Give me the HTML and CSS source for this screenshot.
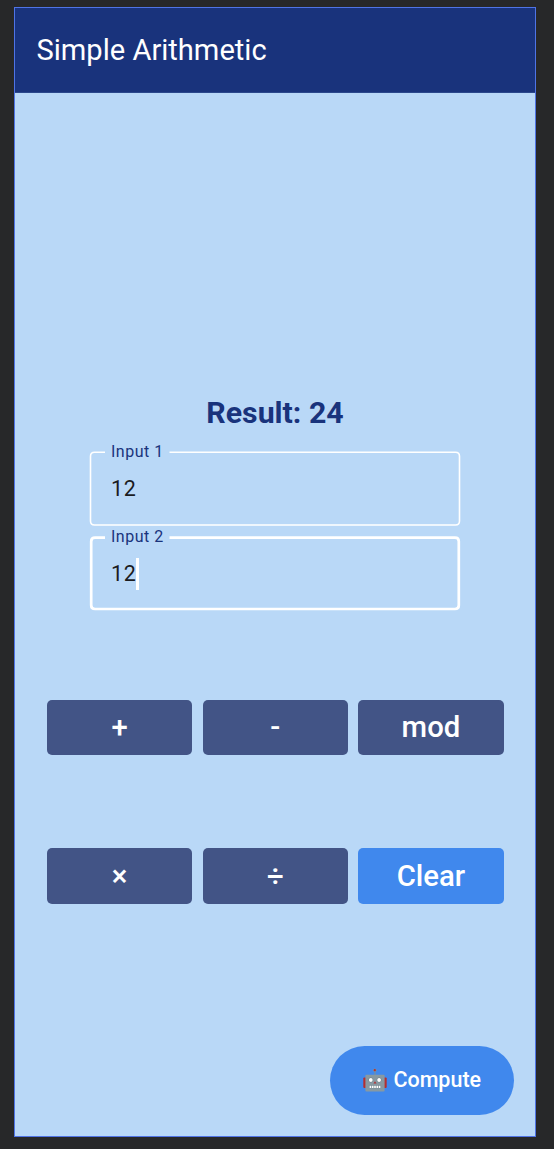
FILE: index.html
```html
<!DOCTYPE html>
<html lang="en">
<head>
<meta charset="utf-8">
<title>Simple Arithmetic</title>
<link rel="stylesheet" href="styles.css">
</head>
<body>
<div class="screen">
  <header class="app-bar"><h1 class="title">Simple Arithmetic</h1></header>
  <main class="content">
    <p class="result">Result: 24</p>
    <div class="field">
      <svg class="outline" viewBox="0 0 372 76"><path d="M16 1.200H5.500Q1.500 1.200 1.500 5.200V70Q1.500 74 5.500 74H366.500Q370.500 74 370.500 70V5.200Q370.500 1.200 366.500 1.200H80.500" stroke-width="1.600"/></svg>
      <span class="label">Input 1</span>
      <span class="value">12</span>
    </div>
    <div class="field">
      <svg class="outline" viewBox="0 0 372 76"><path d="M16 1.600H6Q2.200 1.600 2.200 5.400V69.200Q2.200 73 6 73H366Q369.800 73 369.800 69.200V5.400Q369.800 1.600 366 1.600H80.500" stroke-width="2.700"/></svg>
      <span class="label">Input 2</span>
      <span class="value">12</span><span class="caret"></span>
    </div>
    <div class="keys">
      <button class="key">+</button>
      <button class="key">-</button>
      <button class="key">mod</button>
      <button class="key">×</button>
      <button class="key">÷</button>
      <button class="key clear">Clear</button>
    </div>
    <button class="compute">
      <svg class="robot" viewBox="0 0 24 24">
        <path d="M12 2v5" stroke="#78909c" stroke-width="1.200"/>
        <circle cx="11.800" cy="2.200" r="1.700" fill="#78909c"/><circle cx="11.800" cy="2.200" r="1.100" fill="#b52f30"/>
        <rect x=".3" y="9.500" width="3" height="10.500" rx="1" fill="#b52f30"/>
        <rect x="20.700" y="9.500" width="3" height="10.500" rx="1" fill="#b52f30"/>
        <rect x="2.400" y="6.700" width="19.200" height="16.900" rx="1" fill="#8799a2"/>
        <circle cx="7.800" cy="12" r="2.400" fill="#6b7c84"/><circle cx="16.100" cy="12" r="2.400" fill="#6b7c84"/>
        <circle cx="7.800" cy="12" r="1.900" fill="#fff"/><circle cx="16.100" cy="12" r="1.900" fill="#fff"/>
        <path d="m12 13.200 1.500 2.400h-3z" fill="#b52f30"/>
        <rect x="6" y="17.300" width="12" height="3" rx="1.200" fill="#76878f"/>
        <path d="M6.600 18.800h11" stroke="#fff" stroke-width="2.200" stroke-dasharray="1.600 .7"/>
      </svg>
      <span>Compute</span>
    </button>
  </main>
</div>
</body>
</html>
```
FILE: styles.css
```css
* { box-sizing: border-box; }
body {
  margin: 0;
  height: 1149px;
  padding: 7px 18px 12px 14px;
  background: #272829;
  font-family: Roboto, sans-serif;
}
.screen {
  height: 1130px;
  border: 1px solid #4f74e6;
  background: #b9d8f7;
  display: flex;
  flex-direction: column;
}
.app-bar {
  height: 85px;
  padding: 0 21.500px;
  background: #19337c;
  border-bottom: 1px solid #2b488c;
  display: flex;
  align-items: center;
}
.title {
  margin: 0;
  color: #fff;
  font-size: 29.100px;
  font-weight: 400;
  line-height: 36px;
}
.content {
  flex: 1;
  display: flex;
  flex-direction: column;
  align-items: center;
  padding-top: 302px;
}
.result {
  margin: 0 0 20px;
  color: #19337c;
  font-size: 30.300px;
  font-weight: 700;
  line-height: 36px;
}
.field {
  position: relative;
  width: 372px;
  height: 76px;
  margin-bottom: 9px;
  padding: 23px 22px;
  display: flex;
}
.outline {
  position: absolute;
  inset: 0;
  width: 372px;
  height: 76px;
  fill: none;
  stroke: #fff;
}
.label {
  position: absolute;
  left: 22px;
  top: -9px;
  color: #19337c;
  font-size: 16px;
  line-height: 20px;
  letter-spacing: .5px;
}
.value {
  color: #1b1c1f;
  font-size: 21.500px;
  line-height: 30px;
  letter-spacing: .7px;
}
.caret {
  width: 3px;
  height: 32px;
  margin: -1px 0 0 -1px;
  background: #fff;
}
.keys {
  width: 456.500px;
  margin: 78.500px 0 0 .5px;
  display: grid;
  grid-template-columns: repeat(3, 1fr);
  gap: 93.300px 10.600px;
}
.key {
  height: 55.500px;
  padding: 0;
  border: 0;
  border-radius: 5px;
  background: #425486;
  color: #fff;
  font: 500 29.300px/36px Roboto, sans-serif;
}
.clear { background: #4088ed; }
.compute {
  align-self: flex-end;
  width: 184px;
  height: 69px;
  margin: 142px 21px 0 0;
  padding: 0;
  border: 0;
  border-radius: 35px;
  background: #4088ed;
  color: #fff;
  font: 500 21.500px/28px Roboto, sans-serif;
  display: flex;
  align-items: center;
  justify-content: center;
  gap: 6.500px;
}
.robot { width: 24px; height: 24px; }
```
